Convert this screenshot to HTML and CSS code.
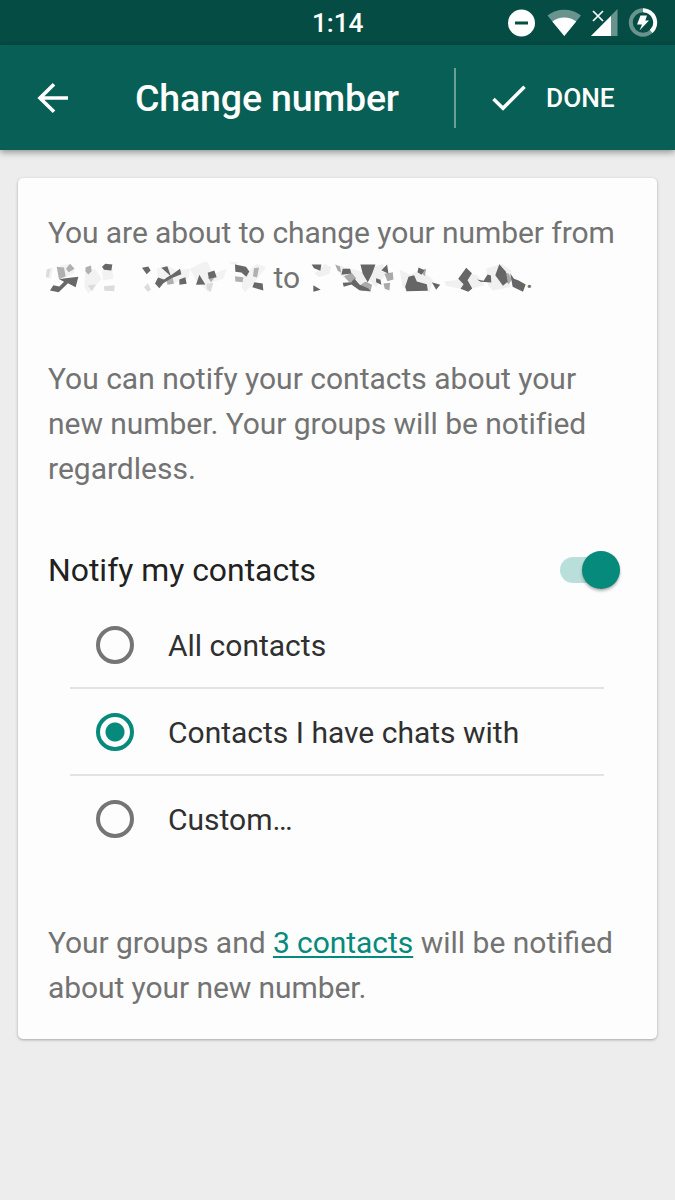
FILE: index.html
```html
<!DOCTYPE html>
<html lang="en">
<head>
<meta charset="utf-8">
<title>Change number</title>
<link rel="stylesheet" href="styles.css">
</head>
<body>
<div class="status-bar">
  <span class="clock">1:14</span>
  <svg class="status-icons" viewBox="0 0 165 32" width="165" height="32">
    <circle cx="21.500" cy="16" r="13.500" fill="#fff"/>
    <rect x="15" y="14.500" width="13" height="3" fill="#054d44"/>
    <path d="M47.500 8.500A27 27 0 0 1 81 8.500L64.300 29Z" fill="#fff" fill-opacity=".4"/>
    <path d="M52.300 14.500A20 20 0 0 1 76.200 14.500L64.300 29Z" fill="#fff"/>
    <path d="M117.500 2V29H91Z" fill="#fff" fill-opacity=".4"/>
    <path d="M111 9V29H91Z" fill="#fff"/>
    <path d="M93 4l10 10M103 4l-10 10" stroke="#054d44" stroke-width="4"/>
    <path d="M93 4l10 10M103 4l-10 10" stroke="#fff" stroke-width="1.700"/>
    <circle cx="143" cy="15.500" r="12.200" fill="none" stroke="#fff" stroke-opacity=".4" stroke-width="4"/>
    <path d="M143 3.300A12.200 12.200 0 0 1 151.200 24.500" fill="none" stroke="#fff" stroke-width="4"/>
    <path d="M140.500 8.500H147L145.300 13.500H149L139.500 23.500L142 17.500H137Z" fill="#fff"/>
  </svg>
</div>
<header class="app-bar">
  <svg class="back" viewBox="0 0 32 32" width="32" height="32"><path d="M31 16H3M17 2.200L3 16L17 29.800" fill="none" stroke="#fff" stroke-width="3.600"/></svg>
  <h1 class="title">Change number</h1>
  <div class="done">
    <svg class="check" viewBox="0 0 34 26" width="34" height="26"><path d="M1.500 14L11 23.200L32.500 1.800" fill="none" stroke="#fff" stroke-width="3.500"/></svg>
    <span class="done-label">DONE</span>
  </div>
</header>
<main class="card">
  <p class="text intro"><span class="tight">You are about to change your number from</span><br><svg class="redacted first" viewBox="15 20 660 95" width="220" height="32">
      <g fill="#f2f2f2"><path d="M25 40l14-4-6 34-17-4zM60 30l30-5 15 25-35 20zM135 50l30-10 20 30-40 45-12-20zM185 45l32-5 3 30-30 5zM350 40l30-10 30 15 40-5-5 30-50 15-40-10zM450 40l50-25 20 40 40-15-10 30-35 10-10 30-20-20-20-20zM565 20l25-5 5 20zM610 60l40-35 30 10-25 30-15 20-25 25-10-15z"/></g>
      <g fill="#dcdcdc"><path d="M143 90l25-3-12 20zM192 92l32-3-1 18-30-1zM312 95l12-12 9 20-10 6zM20 42l12-3-6 28-8-4zM500 85l20-3-8 28-12-10z"/></g>
      <g fill="#b0b0b0"><path d="M50 34l22 2 5 26-20 10zM78 40l12-15 14 15-18 10zM137 35l16-5 2 17-10 10-9-10zM380 65l17-2 5 22-20 3zM503 65l20 2-10 13zM585 62l25 3-2 15-22-2zM642 38l15-2-6 30-12-4z"/></g>
      <g fill="#686868"><path d="M186 34l10-9 21 2-3 18-22-2zM30 105l10-16 18 4 14-14-14-8 19-3 38-4-8 31-23-12-28 27zM306 37l19-4 7 12-12 11zM364 37l18-5 10 28 28-20 4 16-30 12-24 15-12 15-13-14 9-18 18 6 18-12zM418 72l18-7 4 20-22 3zM468 88l10-30 18 29zM503 52l20-7 7 20-23 5zM585 27l33 7 10 14-9 16-15-13-18-2zM643 80l25 4 2 21-33-10z"/></g>
    </svg> to <svg class="redacted second" viewBox="75 20 650 95" width="217" height="32">
      <g fill="#f0f0f0"><path d="M85 55l30-30 20 10-5 20-30 10zM145 25l30 10 40 10 25 10-5 35-30 5-40-35zM260 35l30-10 10 30-30 40-20-20zM340 42l30 15 25-10 20 5 25 20-10 40-30-20-50 5zM475 78l45-5 20 10-10 18-50-10zM540 50l35 10 20 30-45 10zM600 40l45-15 30 20-5 50-50 10-15-15z"/></g>
      <g fill="#aaa"><path d="M148 28l14 5 3 18-10-5zM174 62l23-10 14 18-20 12zM218 92l20-14 20 10-5 20-30-3zM295 55l25-5 2 22-18 5zM292 84l20-2-2 23-14-5zM400 45l20-5-4 22zM655 52l12 2 10 18-10 14-12-12z"/></g>
      <g fill="#666"><path d="M77 27h29l-3 19-19-8zM82 89l22 14-22 6zM170 40h22l4 14-30 4zM170 82l25-2 10-10 16 18 25 10 8 9-34-3-24-17-23 7zM223 27h45l-10 28-13 26-15-26zM286 44l17-17 4 28zM270 68l13 5 3 15-16-8zM357 94l10-30 17-5 8 19 30 8 3 20-64 1zM397 36l18 8-9 14-12-8zM437 80l25 8-12 15zM516 70l24-33 17 16-13 21 14 25-12 10-23-9 9-14zM572 72l20 4 12-19 10 3 1 21-32-2zM627 59l12-33 20 23 5 30-14 12zM672 54l11 16 14 5 21 12-8 22-31-15z"/></g>
    </svg>.</p>
  <p class="text explain">You can notify your contacts about your<br><span class="snug">new number. Your groups will be notified</span><br>regardless.</p>
  <div class="notify">
    <span class="notify-label">Notify my contacts</span>
    <span class="switch"><span class="thumb"></span></span>
  </div>
  <div class="options">
    <div class="option"><span class="radio"></span><span class="option-label">All contacts</span></div>
    <div class="option"><span class="radio checked"></span><span class="option-label">Contacts I have chats with</span></div>
    <div class="option"><span class="radio"></span><span class="option-label">Custom…</span></div>
  </div>
  <p class="text summary"><span class="snug">Your groups and <a class="link">3 contacts</a></span> will be notified<br><span class="tight">about your new number.</span></p>
</main>
</body>
</html>
```
FILE: styles.css
```css
* { box-sizing: border-box; }
body {
  margin: 0;
  height: 1200px;
  background: #ededed;
  font-family: Roboto, "Liberation Sans", sans-serif;
  font-size: 30px;
  overflow: hidden;
}
.status-bar {
  height: 45px;
  padding: 0 10px 0 312px;
  background: #054d44;
  color: #fff;
  display: flex;
  align-items: center;
  justify-content: space-between;
}
.clock { font-size: 26.25px; font-weight: 500; line-height: 45px; padding-top: 2px; letter-spacing: -.1px; }
.status-icons { display: block; }
.app-bar {
  height: 105px;
  padding-left: 37px;
  background: #085f55;
  color: #fff;
  display: flex;
  align-items: center;
  box-shadow: 0 2px 7px rgba(0, 0, 0, .42);
}
.back { display: block; width: 32px; }
.title {
  margin: 0 0 0 66px;
  width: 319px;
  font-size: 37.5px;
  font-weight: 500;
  letter-spacing: -.15px;
  white-space: nowrap;
}
.done {
  height: 60px;
  padding-left: 36px;
  border-left: 2px solid rgba(255, 255, 255, .4);
  display: flex;
  align-items: center;
  gap: 20px;
}
.done-label { font-size: 26.25px; font-weight: 500; padding-top: 1px; }
.card {
  width: 639px;
  height: 861px;
  margin: 28px 0 0 18px;
  padding: 32px 30px 0;
  background: #fdfdfd;
  border-radius: 5px;
  box-shadow: 0 1px 3px rgba(0, 0, 0, .3);
}
.text { margin: 0; color: #737373; line-height: 45px; white-space: nowrap; }
.tight { letter-spacing: -.08px; }
.snug { letter-spacing: -.05px; }
.intro { height: 146px; }
.redacted { display: inline-block; vertical-align: -6px; }
.first { margin: 0 1px 0 -3px; }
.second { margin-left: 3px; margin-right: -2px; }
.explain { height: 181px; }
.notify {
  height: 65px;
  padding-right: 7px;
  color: #212121;
  display: flex;
  align-items: center;
  justify-content: space-between;
}
.notify-label { font-size: 31.9px; padding-top: 1px; }
.switch {
  width: 60px;
  height: 26px;
  border-radius: 13px;
  background: #b9dfda;
  display: flex;
  align-items: center;
  justify-content: flex-end;
}
.thumb {
  width: 38px;
  height: 38px;
  border-radius: 50%;
  background: #068a7b;
  box-shadow: 0 2px 3px rgba(0, 0, 0, .3);
}
.options { width: 534px; margin-left: 22px; color: #303030; }
.option {
  height: 87px;
  padding: 0 0 0 26px;
  border-bottom: 2px solid #e3e3e3;
  display: flex;
  align-items: center;
  gap: 34px;
}
.option:last-child { height: 85px; border-bottom: 0; }
.option-label { padding-top: 2px; }
.radio {
  width: 38px;
  height: 38px;
  border: 4px solid #757575;
  border-radius: 50%;
}
.checked {
  border-color: #068a7b;
  background: radial-gradient(circle, #068a7b 9px, transparent 10px);
}
.summary { padding-top: 59px; }
.link { color: #068a7b; text-decoration: underline; text-decoration-thickness: 2px; text-underline-offset: 3px; }
```
